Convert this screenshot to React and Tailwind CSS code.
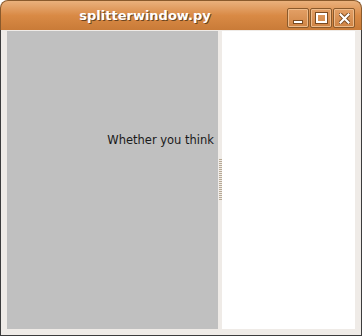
export default function App() {
  return (
    <div className="w-[362px] h-[336px] bg-white flex flex-col" style={{ fontFamily: '"DejaVu Sans", sans-serif' }}>
      <div className="h-[30px] shrink-0 rounded-t-[8px] border border-[#8a5a2c] border-b-0 bg-gradient-to-b from-[#eab17c] via-[#d98a45] to-[#c97b38] flex items-center relative">
        <div className="flex-1 text-center pr-[72px] text-white font-bold text-[13px] [text-shadow:1px_1px_0_#6b4420]">splitterwindow.py</div>
        <div className="absolute right-[6px] top-[7px] flex gap-[1px]">
          <div className="w-[22px] h-[20px] border border-[#8a5a2c] rounded-[2px] shadow-[inset_0_0_0_1px_#eebb8a] bg-gradient-to-b from-[#e3a066] to-[#cf8444] flex items-center justify-center">
            <div className="w-[10px] h-[4px] bg-white mt-[8px] border border-[#7a4a20]" />
          </div>
          <div className="w-[22px] h-[20px] border border-[#8a5a2c] rounded-[2px] shadow-[inset_0_0_0_1px_#eebb8a] bg-gradient-to-b from-[#e3a066] to-[#cf8444] flex items-center justify-center">
            <div className="w-[11px] h-[10px] border-2 border-white outline outline-1 outline-[#7a4a20]" />
          </div>
          <div className="w-[22px] h-[20px] border border-[#8a5a2c] rounded-[2px] shadow-[inset_0_0_0_1px_#eebb8a] bg-gradient-to-b from-[#e3a066] to-[#cf8444] flex items-center justify-center">
            <svg width="11" height="11" viewBox="0 0 11 11">
              <path d="M1.5 1.5 L9.5 9.5 M9.5 1.5 L1.5 9.5" stroke="#7a4a20" strokeWidth="4" strokeLinecap="square" />
              <path d="M1.5 1.5 L9.5 9.5 M9.5 1.5 L1.5 9.5" stroke="#ffffff" strokeWidth="2.2" strokeLinecap="square" />
            </svg>
          </div>
        </div>
      </div>
      <div className="flex-1 flex bg-[#efebe7] border border-t-0 border-[#3c3c3c] pl-[6px] pr-[6px] pt-[1px] pb-[6px]">
        <div className="w-[211px] bg-[#c0c0c0] flex items-start justify-end pt-[101px] pr-[4px]">
          <span className="text-[11.5px] text-[#1a1a1a]">Whether you think</span>
        </div>
        <div className="w-[4px] flex items-center justify-center">
          <div className="w-[3px] h-[41px] mt-[-1px] bg-[repeating-linear-gradient(to_bottom,#b7a994_0px,#b7a994_1px,transparent_1px,transparent_2px)]" />
        </div>
        <div className="flex-1 bg-white" />
      </div>
    </div>
  );
}
